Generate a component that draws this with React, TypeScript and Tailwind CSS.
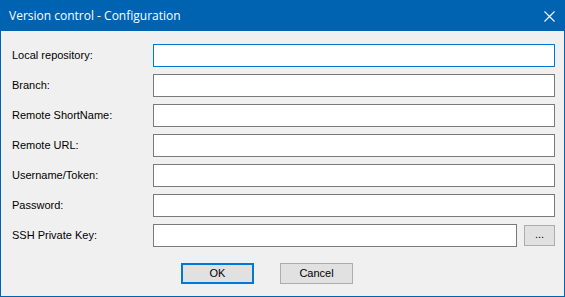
const fields = [
  "Local repository:",
  "Branch:",
  "Remote ShortName:",
  "Remote URL:",
  "Username/Token:",
  "Password:",
];

export default function App() {
  return (
    <div
      className="w-[565px] h-[297px] flex flex-col border border-t-0 border-[#0063b1] bg-[#f0f0f0] text-black"
      style={{ fontFamily: '"Liberation Sans", Arial, sans-serif' }}
    >
      {/* title bar */}
      <div className="h-[31px] -mx-px flex items-center justify-between bg-[#0063b1] text-white pl-[9px] pr-[10px] shrink-0">
        <span className="text-[12px]" style={{ fontFamily: '"Open Sans", "Noto Sans", sans-serif' }}>
          Version control - Configuration
        </span>
        <svg width="11" height="11" viewBox="0 0 11 11" className="mt-[1px]">
          <path d="M0.5 0.5 L10.5 10.5 M10.5 0.5 L0.5 10.5" stroke="white" strokeWidth="1.1" />
        </svg>
      </div>

      {/* form */}
      <div className="flex flex-col gap-[7px] pt-[13px] pl-[11px] pr-[9px]">
        {fields.map((label, i) => (
          <div key={label} className="flex items-center h-[23px]">
            <label className="w-[141px] text-[11px] leading-none">{label}</label>
            <div
              className={`flex-1 h-[23px] bg-white border ${
                i === 0 ? "border-[#0078d7]" : "border-[#7a7a7a]"
              }`}
            />
          </div>
        ))}
        <div className="flex items-center h-[23px]">
          <label className="w-[141px] text-[11px] leading-none">SSH Private Key:</label>
          <div className="w-[364px] h-[23px] bg-white border border-[#7a7a7a]" />
          <button className="ml-[7px] w-[31px] h-[21px] bg-[#e1e1e1] border border-[#adadad] text-[11px] leading-none pb-[3px]">
            ...
          </button>
        </div>
      </div>

      {/* buttons */}
      <div className="flex gap-[26px] pt-[16px] pl-[180px]">
        <button className="w-[73px] h-[21px] bg-[#e1e1e1] border-2 border-[#0078d7] text-[11px] leading-none">
          OK
        </button>
        <button className="w-[73px] h-[21px] bg-[#e1e1e1] border border-[#adadad] text-[11px] leading-none">
          Cancel
        </button>
      </div>
    </div>
  );
}
